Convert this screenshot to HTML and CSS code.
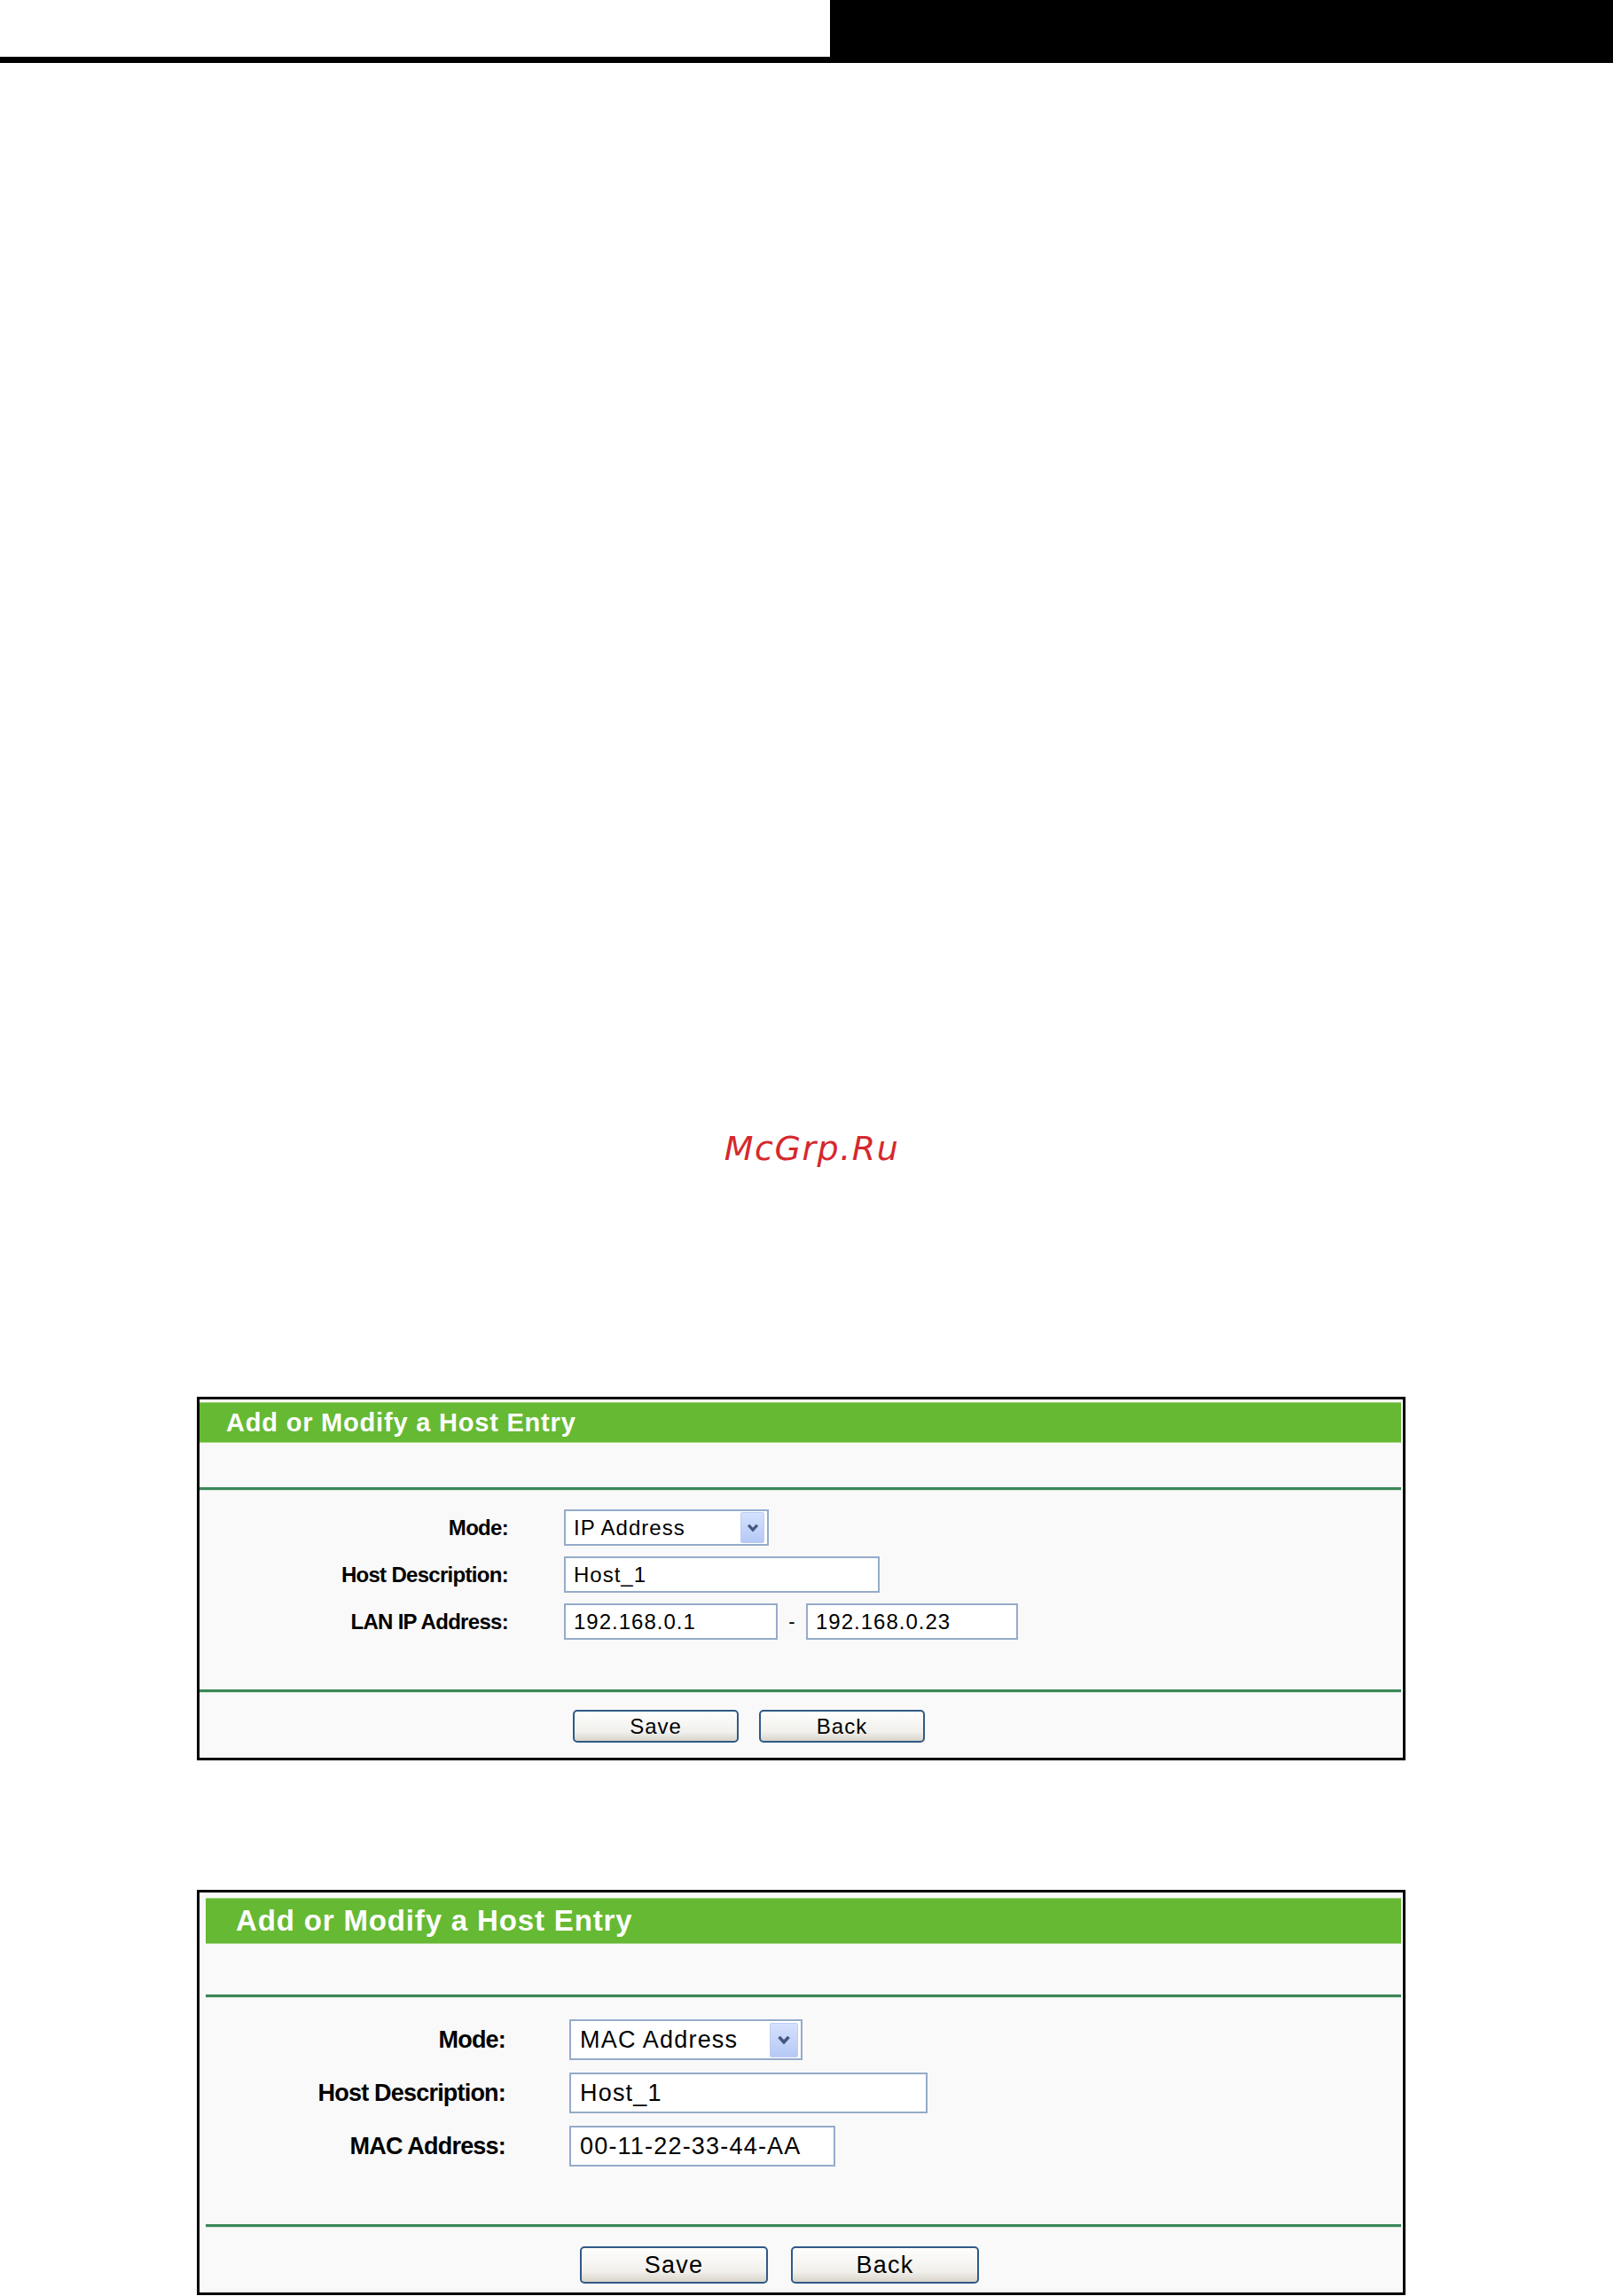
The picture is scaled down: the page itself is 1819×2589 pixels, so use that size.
FILE: index.html
```html
<!DOCTYPE html>
<html lang="en">
<head>
    <meta charset="UTF-8">
    <meta name="viewport" content="width=device-width, initial-scale=1.0">
    <title>Add or Modify a Host Entry</title>
    <link rel="stylesheet" href="styles.css">
</head>
<body>
    <div class="top-bar">
        <div class="top-left"></div>
        <div class="top-right"></div>
    </div>

    <p class="watermark">McGrp.Ru</p>

    <div class="page">
        <!-- IP address mode -->
        <div class="panel panel-small">
            <div class="panel-head">Add or Modify a Host Entry</div>
            <div class="head-gap"></div>
            <div class="divider"></div>
            <div class="form-rows">
                <label class="form-label">Mode:</label>
                <div class="select select-ip">
                    <span>IP Address</span>
                    <span class="select-arrow">
                        <svg viewBox="0 0 12 10" width="14" height="12"><polyline points="1.8,2.2 6,6.8 10.2,2.2" fill="none" stroke="#44587e" stroke-width="2.8"/></svg>
                    </span>
                </div>

                <label class="form-label">Host Description:</label>
                <input class="field field-host" type="text" value="Host_1">

                <label class="form-label">LAN IP Address:</label>
                <div class="ip-range">
                    <input class="field field-ip" type="text" value="192.168.0.1">
                    <span class="dash">-</span>
                    <input class="field field-ip2" type="text" value="192.168.0.23">
                </div>
            </div>
            <div class="divider"></div>
            <div class="button-row">
                <button class="btn">Save</button>
                <button class="btn">Back</button>
            </div>
        </div>

        <!-- MAC address mode -->
        <div class="panel panel-large">
            <div class="panel-head">Add or Modify a Host Entry</div>
            <div class="head-gap"></div>
            <div class="divider"></div>
            <div class="form-rows">
                <label class="form-label">Mode:</label>
                <div class="select select-mac">
                    <span>MAC Address</span>
                    <span class="select-arrow">
                        <svg viewBox="0 0 12 10" width="16" height="13"><polyline points="1.8,2.2 6,6.8 10.2,2.2" fill="none" stroke="#44587e" stroke-width="2.8"/></svg>
                    </span>
                </div>

                <label class="form-label">Host Description:</label>
                <input class="field field-host" type="text" value="Host_1">

                <label class="form-label">MAC Address:</label>
                <input class="field field-mac" type="text" value="00-11-22-33-44-AA">
            </div>
            <div class="divider"></div>
            <div class="button-row">
                <button class="btn">Save</button>
                <button class="btn">Back</button>
            </div>
        </div>
    </div>
</body>
</html>
```

FILE: styles.css
```css
body{
    margin: 0;
    background-color: white;
    font-family: "Liberation Sans", Arial, sans-serif;
}

/* page header strip */
.top-bar{
    display: flex;
    height: 71px;
}
.top-left{
    width: 936px;
    height: 64px;
    border-bottom: 7px solid black;
    background-color: white;
}
.top-right{
    flex: 1;
    background-color: black;
}

.watermark{
    margin: 1205px 0 0 0;
    padding-left: 12px;
    height: 38px;
    text-align: center;
    font-family: "DejaVu Sans", sans-serif;
    font-style: italic;
    font-size: 38px;
    line-height: 38px;
    letter-spacing: 1.5px;
    color: #d5282c;
}

.page{
    padding-left: 222px;
}

/* panels */
.panel{
    width: 1363px;
    box-sizing: border-box;
    border: 3px solid black;
    background-color: #f9f9f9;
}
.panel-small{
    margin-top: 261px;
    padding: 3px 2px 0 0;
}
.panel-large{
    margin-top: 146px;
    padding: 6px 2px 0 7px;
}

.panel-head{
    box-sizing: border-box;
    background-color: #66b933;
    border-top: 1px solid #a3d487;
    border-bottom: 1px solid #a3d487;
    color: white;
    font-weight: bold;
}
.panel-small .panel-head{
    height: 46px;
    line-height: 44px;
    padding-left: 30px;
    font-size: 29px;
    letter-spacing: 0.8px;
}
.panel-large .panel-head{
    height: 52px;
    line-height: 50px;
    padding-left: 34px;
    font-size: 33px;
    letter-spacing: 0.85px;
}

.panel-small .head-gap{
    height: 50px;
}
.panel-large .head-gap{
    height: 57px;
}

.divider{
    border-top: 3px solid #3b8758;
    box-shadow: 0 1px 0 #d3e6d9;
}

/* label / field grid */
.form-rows{
    display: grid;
    align-items: center;
    justify-items: start;
}
.panel-small .form-rows{
    grid-template-columns: 348px auto;
    grid-auto-rows: 41px;
    column-gap: 63px;
    row-gap: 12px;
    padding: 22px 0 56px 0;
}
.panel-large .form-rows{
    grid-template-columns: 338px auto;
    grid-auto-rows: 46px;
    column-gap: 72px;
    row-gap: 14px;
    padding: 25px 0 65px 0;
}

.form-label{
    justify-self: end;
    font-weight: bold;
    color: black;
}
.panel-small .form-label{
    font-size: 24px;
    letter-spacing: -0.7px;
}
.panel-large .form-label{
    font-size: 27px;
    letter-spacing: -0.8px;
}

.field,
.select{
    box-sizing: border-box;
    border: 2px solid #95abc9;
    background-color: white;
    color: black;
    font-family: "Liberation Sans", Arial, sans-serif;
    outline: none;
}
.panel-small .field,
.panel-small .select{
    height: 41px;
    padding: 0 0 0 9px;
    font-size: 24px;
    letter-spacing: 1px;
}
.panel-large .field,
.panel-large .select{
    height: 46px;
    padding: 0 0 0 10px;
    font-size: 27px;
    letter-spacing: 1.2px;
}

.panel-small .field-host{ width: 356px; }
.panel-large .field-host{ width: 404px; }
.field-ip{ width: 241px; }
.field-ip2{ width: 239px; }
.field-mac{ width: 300px; }

.ip-range{
    display: flex;
    align-items: center;
}
.dash{
    width: 32px;
    text-align: center;
    font-size: 22px;
}

/* fake drop-down */
.select{
    display: flex;
    align-items: center;
    justify-content: space-between;
}
.panel-small .select{
    width: 231px;
    padding-right: 3px;
}
.panel-large .select{
    width: 263px;
    padding-right: 3px;
}
.select-arrow{
    display: flex;
    align-items: center;
    justify-content: center;
    box-sizing: border-box;
    border: 1px solid #bccdf4;
    border-radius: 2px;
    background: linear-gradient(#d5e1fd, #b5c9f6);
}
.panel-small .select-arrow{
    width: 27px;
    height: 35px;
}
.panel-large .select-arrow{
    width: 32px;
    height: 39px;
}

/* buttons */
.button-row{
    display: flex;
}
.panel-small .button-row{
    gap: 23px;
    padding: 20px 0 17px 421px;
}
.panel-large .button-row{
    gap: 26px;
    padding: 22px 0 10px 422px;
}
.btn{
    box-sizing: border-box;
    border: 2px solid #2f5a86;
    border-radius: 5px;
    background: linear-gradient(#fefefd, #f1f0ec 70%, #d9d4ca);
    color: black;
    font-family: "Liberation Sans", Arial, sans-serif;
    cursor: pointer;
}
.panel-small .btn{
    width: 187px;
    height: 37px;
    font-size: 24px;
    letter-spacing: 1px;
}
.panel-large .btn{
    width: 212px;
    height: 42px;
    font-size: 27px;
    letter-spacing: 1.2px;
}
```
